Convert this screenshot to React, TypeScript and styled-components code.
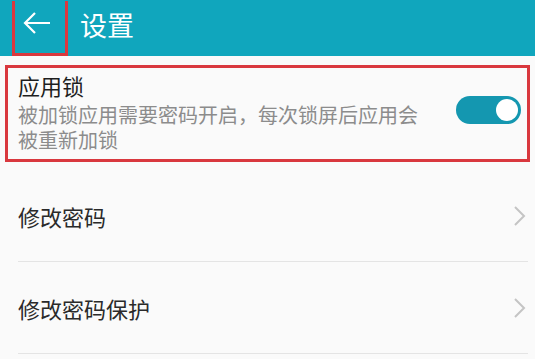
import React from "react";
import styled, { createGlobalStyle } from "styled-components";

const GlobalStyle = createGlobalStyle`
    body {
        margin: 0;
        background: #fafafa;
        font-family: "Noto Sans CJK SC", "Noto Sans", sans-serif;
    }
`

const Page = styled.div`
    width: 535px;
    height: 359px;
    overflow: hidden;
    background: #fafafa;
`

const Header = styled.div`
    height: 56px;
    background: #10a6bd;
    display: flex;
    align-items: center;
`

const BackButton = styled.div`
    margin-left: 12px;
    width: 56px;
    height: 55px;
    box-sizing: border-box;
    border: 3px solid #d9383e;
    border-top: none;
    display: flex;
    align-items: center;
    justify-content: center;
    padding: 0 6px 7px 0;
`

const Title = styled.div`
    margin-left: 12px;
    margin-top: -8px;
    color: #ffffff;
    font-size: 27px;
`

const Highlight = styled.div`
    margin: 9px 5px 0 5px;
    height: 97px;
    box-sizing: border-box;
    border: 3px solid #d9383e;
    display: flex;
    align-items: center;
    padding: 0 6px 0 10px;
`

const LockText = styled.div`
    flex: 1;
    display: flex;
    flex-direction: column;
`

const LockTitle = styled.div`
    font-size: 22px;
    color: #1e1e1e;
    line-height: 28px;
    margin-top: -4px;
`

const LockDesc = styled.div`
    width: 410px;
    font-size: 20px;
    line-height: 25px;
    color: #8c8c8c;
    margin-top: 3px;
`

const Toggle = styled.div<{ $on: boolean }>`
    width: 65px;
    height: 28px;
    border-radius: 14px;
    background: ${p => (p.$on ? "#1497b0" : "#cccccc")};
    display: flex;
    align-items: center;
    justify-content: ${p => (p.$on ? "flex-end" : "flex-start")};
    padding: 0 3px;
    box-sizing: border-box;
    margin-top: -8px;
`

const Knob = styled.div`
    width: 22px;
    height: 22px;
    border-radius: 50%;
    background: #ffffff;
`

const List = styled.div`
    margin-top: 8px;
    padding: 0 7px 0 18px;
`

const Row = styled.div`
    height: 91px;
    display: flex;
    align-items: center;
    justify-content: space-between;
    border-bottom: 1.5px solid #e4e4e4;
    font-size: 22px;
    color: #2a2a2a;
`

const Chevron = () => (
    <svg width="16" height="22" viewBox="0 0 16 22">
        <path d="M3 2 L12 11 L3 20" fill="none" stroke="#c4c4c4" strokeWidth="2" />
    </svg>
)

const App = () => {
    return (
        <Page>
            <GlobalStyle />
            <Header>
                <BackButton>
                    <svg width="30" height="24" viewBox="0 0 30 24">
                        <path d="M28 12 H3 M13 2 L3 12 L13 22" fill="none" stroke="#ffffff" strokeWidth="2.2" />
                    </svg>
                </BackButton>
                <Title>设置</Title>
            </Header>
            <Highlight>
                <LockText>
                    <LockTitle>应用锁</LockTitle>
                    <LockDesc>被加锁应用需要密码开启，每次锁屏后应用会被重新加锁</LockDesc>
                </LockText>
                <Toggle $on={true}>
                    <Knob />
                </Toggle>
            </Highlight>
            <List>
                <Row>
                    修改密码
                    <Chevron />
                </Row>
                <Row>
                    修改密码保护
                    <Chevron />
                </Row>
            </List>
        </Page>
    );
};

export default App
